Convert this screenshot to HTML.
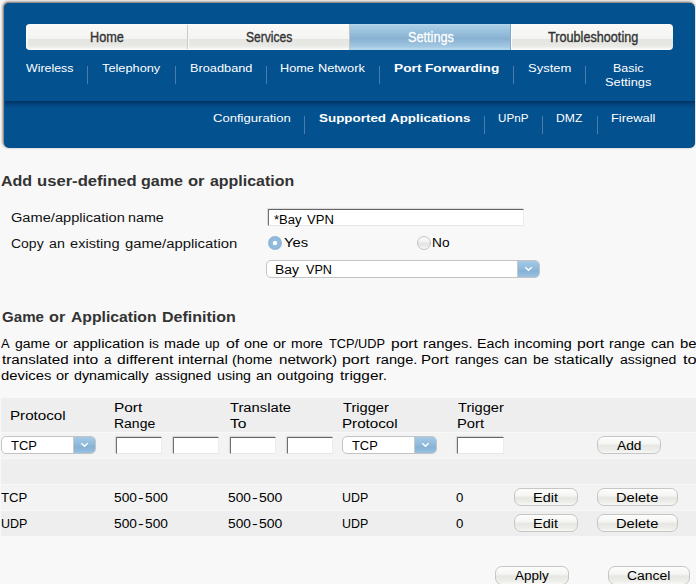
<!DOCTYPE html>
<html><head><meta charset="utf-8">
<style>
html,body{margin:0;padding:0;width:696px;height:584px;overflow:hidden;background:#f8f8f8;font-family:"Liberation Sans",sans-serif;}
.a{position:absolute;}
.t{position:absolute;white-space:nowrap;line-height:normal;transform-origin:0 0;}
#panel{left:4px;top:3px;width:691px;height:145px;background:#03518f;border-radius:5px;box-shadow:-1px -1px 3px rgba(60,45,35,0.8);}
#band{left:5px;top:101px;width:690px;height:7px;background:linear-gradient(#02315e,#03427a 40%,#03518f);}
#tabs{left:26px;top:24px;width:647px;height:26px;border-radius:4px;overflow:hidden;}
.wt{position:absolute;top:0;height:26px;background:linear-gradient(#fefefd 0,#f9f9f7 3.9%,#f4f4f2 55%,#f1f1ef 57.6%,#e5e5e1 57.7%,#e7e7e3 80%,#ececea 88%,#f6f6f4 94%,#fefefd 100%);}
.bt{position:absolute;top:0;height:26px;background:linear-gradient(#bcdbee 0,#aacee6 4%,#96bedb 35%,#88b1d1 57%,#8fb7d6 65%,#a2c8e2 88%,#b6d8ee 96%,#b0d2ea 100%);}
.sep{position:absolute;width:1px;background:#4a7cae;}
.sep2{position:absolute;width:1px;background:#5a88b8;}
.inp{position:absolute;background:#fff;border-top:1px solid #646464;border-left:1px solid #707070;border-right:1px solid #ededed;border-bottom:1px solid #e6e6e6;box-sizing:border-box;box-shadow:-1px -1px 1px rgba(0,0,0,0.12);border-top-left-radius:1px;}
.sel{position:absolute;background:#fff;border:1px solid #c4c4c4;border-radius:5px;box-sizing:border-box;overflow:hidden;}
.arr{position:absolute;top:-1px;bottom:-1px;right:-1px;width:23px;border-left:1px solid #c9c9c9;box-sizing:border-box;background:linear-gradient(#a6cbe6,#8fb9da 50%,#85b1d6 60%,#9cc4e2);border-radius:0 5px 5px 0;}
.btn{position:absolute;border:1px solid #c6c6c6;border-radius:7px;box-sizing:border-box;background:linear-gradient(#fdfdfc 0%,#f6f6f4 40%,#e6e6e2 55%,#eeeeeb 85%,#f8f8f6 100%);}
.chev{position:absolute;left:5.5px;top:6px;}
.radio{position:absolute;width:14px;height:14px;border-radius:50%;box-sizing:border-box;}
</style></head><body>
<div id="panel" class="a"></div>
<div id="band" class="a"></div>
<div id="tabs" class="a">
  <div class="wt" style="left:0;width:323px"></div>
  <div class="a" style="left:161px;top:1px;width:1px;height:24px;background:#cacac6"></div>
  <div class="a" style="left:162px;top:15px;width:1px;height:10px;background:#fdfdfc"></div>
  <div class="a" style="left:323px;top:0;width:1px;height:26px;background:#c4c4c0"></div>
  <div class="bt" style="left:324px;width:161px"></div>
  <div class="a" style="left:484px;top:0;width:1px;height:26px;background:#7fa8c9"></div>
  <div class="wt" style="left:485px;width:162px"></div>
  <div class="a" style="left:485px;top:0;width:1px;height:26px;background:#fefefe"></div>
  <div class="a" style="left:0;top:0;width:3px;height:26px;background:linear-gradient(90deg,#fdfdfc,rgba(253,253,252,0))"></div>
</div>
<!-- subnav separators -->
<div class="sep" style="left:87px;top:66px;height:18px"></div>
<div class="sep" style="left:175px;top:66px;height:18px"></div>
<div class="sep" style="left:266px;top:66px;height:18px"></div>
<div class="sep" style="left:379px;top:66px;height:18px"></div>
<div class="sep" style="left:513px;top:66px;height:18px"></div>
<div class="sep" style="left:585px;top:66px;height:18px"></div>
<div class="sep" style="left:304px;top:116px;height:18px"></div>
<div class="sep" style="left:484px;top:116px;height:18px"></div>
<div class="sep" style="left:542px;top:116px;height:18px"></div>
<div class="sep" style="left:597px;top:116px;height:18px"></div>

<!-- form 1 -->
<div class="inp" style="left:268px;top:209px;width:256px;height:17px"></div>
<div class="radio" style="left:268px;top:236px;background:radial-gradient(circle at 50% 50%,#9cc2e0 0,#8db7da 60%,#a3c8e4 100%);"><div style="position:absolute;left:5px;top:5px;width:4px;height:4px;border-radius:50%;background:#fff;box-shadow:0 0 0.6px #fff"></div></div>
<div class="radio" style="left:417px;top:236px;border:1px solid #c2c2c2;background:linear-gradient(#fbfbfb,#f2f2f2 40%,#e2e2e2 55%,#ececec 80%,#f8f8f8);"></div>
<div class="sel" style="left:266px;top:260px;width:274px;height:18px"><div class="arr"><svg class="chev" width="9" height="6" viewBox="0 0 9 6"><polyline points="1.3,1.3 4.5,4.3 7.7,1.3" fill="none" stroke="#fff" stroke-width="1.5"/></svg></div></div>

<!-- table -->
<div class="a" style="left:1px;top:398px;width:695px;height:34px;background:#eeeeee"></div>
<div class="a" style="left:1px;top:433px;width:695px;height:25px;background:#f3f3f3"></div>
<div class="a" style="left:1px;top:459px;width:695px;height:25px;background:#eeeeee"></div>
<div class="a" style="left:1px;top:485px;width:695px;height:25px;background:#f3f3f3"></div>
<div class="a" style="left:1px;top:511px;width:695px;height:25px;background:#eeeeee"></div>

<div class="sel" style="left:1px;top:436px;width:95px;height:18px"><div class="arr"><svg class="chev" width="9" height="6" viewBox="0 0 9 6"><polyline points="1.3,1.3 4.5,4.3 7.7,1.3" fill="none" stroke="#fff" stroke-width="1.5"/></svg></div></div>
<div class="inp" style="left:116px;top:437px;width:46px;height:17px"></div>
<div class="inp" style="left:173px;top:437px;width:46px;height:17px"></div>
<div class="inp" style="left:230px;top:437px;width:46px;height:17px"></div>
<div class="inp" style="left:287px;top:437px;width:46px;height:17px"></div>
<div class="sel" style="left:342px;top:436px;width:95px;height:18px"><div class="arr"><svg class="chev" width="9" height="6" viewBox="0 0 9 6"><polyline points="1.3,1.3 4.5,4.3 7.7,1.3" fill="none" stroke="#fff" stroke-width="1.5"/></svg></div></div>
<div class="inp" style="left:457px;top:437px;width:47px;height:17px"></div>
<div class="btn" style="left:597px;top:436px;width:64px;height:18px"></div>

<div class="btn" style="left:514px;top:488px;width:64px;height:18px"></div>
<div class="btn" style="left:597px;top:488px;width:81px;height:18px"></div>
<div class="btn" style="left:514px;top:514px;width:64px;height:18px"></div>
<div class="btn" style="left:597px;top:514px;width:81px;height:18px"></div>
<div class="btn" style="left:495px;top:566px;width:74px;height:19px"></div>
<div class="btn" style="left:608px;top:566px;width:82px;height:19px"></div>
<div class="t" style="left:89.80px;top:29px;font-size:14px;font-weight:normal;color:#333;transform:scaleX(0.9058);-webkit-text-stroke:0.35px #333">Home</div>
<div class="t" style="left:246.38px;top:29px;font-size:14px;font-weight:normal;color:#333;transform:scaleX(0.8615);-webkit-text-stroke:0.35px #333">Services</div>
<div class="t" style="left:408.46px;top:29px;font-size:14px;font-weight:normal;color:#fff;transform:scaleX(0.9073);-webkit-text-stroke:0.3px #fff">Settings</div>
<div class="t" style="left:548.03px;top:29px;font-size:14px;font-weight:normal;color:#333;transform:scaleX(0.9038);-webkit-text-stroke:0.35px #333">Troubleshooting</div>
<div class="t" style="left:25.90px;top:62px;font-size:11px;font-weight:normal;color:#fff;transform:scaleX(1.1250);">Wireless</div>
<div class="t" style="left:102.27px;top:62px;font-size:11px;font-weight:normal;color:#fff;transform:scaleX(1.1612);">Telephony</div>
<div class="t" style="left:189.66px;top:62px;font-size:11px;font-weight:normal;color:#fff;transform:scaleX(1.1605);">Broadband</div>
<div class="t" style="left:280.46px;top:62px;font-size:11px;font-weight:normal;color:#fff;transform:scaleX(1.1526);">Home</div>
<div class="t" style="left:317.96px;top:62px;font-size:11px;font-weight:normal;color:#fff;transform:scaleX(1.1608);">Network</div>
<div class="t" style="left:393.53px;top:62px;font-size:11px;font-weight:bold;color:#fff;transform:scaleX(1.2478);">Port</div>
<div class="t" style="left:425.13px;top:62px;font-size:11px;font-weight:bold;color:#fff;transform:scaleX(1.2400);">Forwarding</div>
<div class="t" style="left:527.91px;top:62px;font-size:11px;font-weight:normal;color:#fff;transform:scaleX(1.1827);">System</div>
<div class="t" style="left:612.98px;top:62px;font-size:11px;font-weight:normal;color:#fff;transform:scaleX(1.1319);">Basic</div>
<div class="t" style="left:604.82px;top:76px;font-size:11px;font-weight:normal;color:#fff;transform:scaleX(1.1657);">Settings</div>
<div class="t" style="left:212.91px;top:112px;font-size:11px;font-weight:normal;color:#fff;transform:scaleX(1.1879);">Configuration</div>
<div class="t" style="left:319.03px;top:112px;font-size:11px;font-weight:bold;color:#fff;transform:scaleX(1.2191);">Supported</div>
<div class="t" style="left:390.16px;top:112px;font-size:11px;font-weight:bold;color:#fff;transform:scaleX(1.2174);">Applications</div>
<div class="t" style="left:498.35px;top:112px;font-size:11px;font-weight:normal;color:#fff;transform:scaleX(1.0585);">UPnP</div>
<div class="t" style="left:556.40px;top:112px;font-size:11px;font-weight:normal;color:#fff;transform:scaleX(1.1059);">DMZ</div>
<div class="t" style="left:611.25px;top:112px;font-size:11px;font-weight:normal;color:#fff;transform:scaleX(1.1720);">Firewall</div>
<div class="t" style="left:1.06px;top:173px;font-size:14px;font-weight:bold;color:#333;transform:scaleX(1.1434);">Add</div>
<div class="t" style="left:36.75px;top:173px;font-size:14px;font-weight:bold;color:#333;transform:scaleX(1.1874);">user-defined</div>
<div class="t" style="left:141.03px;top:173px;font-size:14px;font-weight:bold;color:#333;transform:scaleX(1.1461);">game</div>
<div class="t" style="left:188.01px;top:173px;font-size:14px;font-weight:bold;color:#333;transform:scaleX(1.1834);">or</div>
<div class="t" style="left:210.04px;top:173px;font-size:14px;font-weight:bold;color:#333;transform:scaleX(1.1398);">application</div>
<div class="t" style="left:11.20px;top:211px;font-size:12.5px;font-weight:normal;color:#111;transform:scaleX(1.1697);">Game/application</div>
<div class="t" style="left:128.29px;top:211px;font-size:12.5px;font-weight:normal;color:#111;transform:scaleX(1.1432);">name</div>
<div class="t" style="left:10.93px;top:237px;font-size:12.5px;font-weight:normal;color:#111;transform:scaleX(1.1177);">Copy</div>
<div class="t" style="left:49.43px;top:237px;font-size:12.5px;font-weight:normal;color:#111;transform:scaleX(1.1382);">an</div>
<div class="t" style="left:69.92px;top:237px;font-size:12.5px;font-weight:normal;color:#111;transform:scaleX(1.1694);">existing</div>
<div class="t" style="left:124.91px;top:237px;font-size:12.5px;font-weight:normal;color:#111;transform:scaleX(1.1871);">game/application</div>
<div class="t" style="left:274.09px;top:213px;font-size:12.5px;font-weight:normal;color:#000;transform:scaleX(1.0437);">*Bay</div>
<div class="t" style="left:306.50px;top:213px;font-size:12.5px;font-weight:normal;color:#000;transform:scaleX(1.0454);">VPN</div>
<div class="t" style="left:283.76px;top:236px;font-size:12.5px;font-weight:normal;color:#000;transform:scaleX(1.1802);">Yes</div>
<div class="t" style="left:432.21px;top:236px;font-size:12.5px;font-weight:normal;color:#000;transform:scaleX(1.0945);">No</div>
<div class="t" style="left:275.29px;top:263px;font-size:12.5px;font-weight:normal;color:#000;transform:scaleX(1.1122);">Bay</div>
<div class="t" style="left:305.60px;top:263px;font-size:12.5px;font-weight:normal;color:#000;transform:scaleX(1.0091);">VPN</div>
<div class="t" style="left:1.56px;top:309px;font-size:14px;font-weight:bold;color:#333;transform:scaleX(1.0783);">Game</div>
<div class="t" style="left:49.12px;top:309px;font-size:14px;font-weight:bold;color:#333;transform:scaleX(1.1609);">or</div>
<div class="t" style="left:71.26px;top:309px;font-size:14px;font-weight:bold;color:#333;transform:scaleX(1.1216);">Application</div>
<div class="t" style="left:162.17px;top:309px;font-size:14px;font-weight:bold;color:#333;transform:scaleX(1.1450);">Definition</div>
<div class="t" style="left:1.15px;top:337px;font-size:12px;font-weight:normal;color:#000;transform:scaleX(1.0813);">A</div>
<div class="t" style="left:14.92px;top:337px;font-size:12px;font-weight:normal;color:#000;transform:scaleX(1.1672);">game</div>
<div class="t" style="left:55.09px;top:337px;font-size:12px;font-weight:normal;color:#000;transform:scaleX(1.2132);">or</div>
<div class="t" style="left:73.38px;top:337px;font-size:12px;font-weight:normal;color:#000;transform:scaleX(1.2406);">application</div>
<div class="t" style="left:148.88px;top:337px;font-size:12px;font-weight:normal;color:#000;transform:scaleX(1.1519);">is</div>
<div class="t" style="left:164.46px;top:337px;font-size:12px;font-weight:normal;color:#000;transform:scaleX(1.1961);">made</div>
<div class="t" style="left:204.94px;top:337px;font-size:12px;font-weight:normal;color:#000;transform:scaleX(1.0925);">up</div>
<div class="t" style="left:225.74px;top:337px;font-size:12px;font-weight:normal;color:#000;transform:scaleX(1.3265);">of</div>
<div class="t" style="left:243.70px;top:337px;font-size:12px;font-weight:normal;color:#000;transform:scaleX(1.2022);">one</div>
<div class="t" style="left:272.99px;top:337px;font-size:12px;font-weight:normal;color:#000;transform:scaleX(1.2132);">or</div>
<div class="t" style="left:290.58px;top:337px;font-size:12px;font-weight:normal;color:#000;transform:scaleX(1.1656);">more</div>
<div class="t" style="left:329.39px;top:337px;font-size:12px;font-weight:normal;color:#000;transform:scaleX(1.0643);">TCP/UDP</div>
<div class="t" style="left:390.99px;top:337px;font-size:12px;font-weight:normal;color:#000;transform:scaleX(1.2987);">port</div>
<div class="t" style="left:422.63px;top:337px;font-size:12px;font-weight:normal;color:#000;transform:scaleX(1.2379);">ranges.</div>
<div class="t" style="left:476.73px;top:337px;font-size:12px;font-weight:normal;color:#000;transform:scaleX(1.1839);">Each</div>
<div class="t" style="left:514.34px;top:337px;font-size:12px;font-weight:normal;color:#000;transform:scaleX(1.2013);">incoming</div>
<div class="t" style="left:576.68px;top:337px;font-size:12px;font-weight:normal;color:#000;transform:scaleX(1.3137);">port</div>
<div class="t" style="left:609.18px;top:337px;font-size:12px;font-weight:normal;color:#000;transform:scaleX(1.1756);">range</div>
<div class="t" style="left:650.99px;top:337px;font-size:12px;font-weight:normal;color:#000;transform:scaleX(1.2117);">can</div>
<div class="t" style="left:679.53px;top:337px;font-size:12px;font-weight:normal;color:#000;transform:scaleX(1.2404);">be</div>
<div class="t" style="left:1.57px;top:353px;font-size:12px;font-weight:normal;color:#000;transform:scaleX(1.2639);">translated</div>
<div class="t" style="left:72.96px;top:353px;font-size:12px;font-weight:normal;color:#000;transform:scaleX(1.3058);">into</div>
<div class="t" style="left:103.94px;top:353px;font-size:12px;font-weight:normal;color:#000;transform:scaleX(1.1129);">a</div>
<div class="t" style="left:117.05px;top:353px;font-size:12px;font-weight:normal;color:#000;transform:scaleX(1.3049);">different</div>
<div class="t" style="left:178.09px;top:353px;font-size:12px;font-weight:normal;color:#000;transform:scaleX(1.2675);">internal</div>
<div class="t" style="left:232.47px;top:353px;font-size:12px;font-weight:normal;color:#000;transform:scaleX(1.1906);">(home</div>
<div class="t" style="left:278.72px;top:353px;font-size:12px;font-weight:normal;color:#000;transform:scaleX(1.2641);">network)</div>
<div class="t" style="left:342.47px;top:353px;font-size:12px;font-weight:normal;color:#000;transform:scaleX(1.3237);">port</div>
<div class="t" style="left:375.85px;top:353px;font-size:12px;font-weight:normal;color:#000;transform:scaleX(1.2170);">range.</div>
<div class="t" style="left:421.27px;top:353px;font-size:12px;font-weight:normal;color:#000;transform:scaleX(1.2527);">Port</div>
<div class="t" style="left:455.17px;top:353px;font-size:12px;font-weight:normal;color:#000;transform:scaleX(1.1913);">ranges</div>
<div class="t" style="left:504.40px;top:353px;font-size:12px;font-weight:normal;color:#000;transform:scaleX(1.2062);">can</div>
<div class="t" style="left:532.87px;top:353px;font-size:12px;font-weight:normal;color:#000;transform:scaleX(1.1829);">be</div>
<div class="t" style="left:554.01px;top:353px;font-size:12px;font-weight:normal;color:#000;transform:scaleX(1.2885);">statically</div>
<div class="t" style="left:620.41px;top:353px;font-size:12px;font-weight:normal;color:#000;transform:scaleX(1.1719);">assigned</div>
<div class="t" style="left:682.56px;top:353px;font-size:12px;font-weight:normal;color:#000;transform:scaleX(1.3674);">to</div>
<div class="t" style="left:0.78px;top:369px;font-size:12px;font-weight:normal;color:#000;transform:scaleX(1.2366);">devices</div>
<div class="t" style="left:55.69px;top:369px;font-size:12px;font-weight:normal;color:#000;transform:scaleX(1.2132);">or</div>
<div class="t" style="left:74.01px;top:369px;font-size:12px;font-weight:normal;color:#000;transform:scaleX(1.1899);">dynamically</div>
<div class="t" style="left:154.92px;top:369px;font-size:12px;font-weight:normal;color:#000;transform:scaleX(1.1698);">assigned</div>
<div class="t" style="left:216.97px;top:369px;font-size:12px;font-weight:normal;color:#000;transform:scaleX(1.1832);">using</div>
<div class="t" style="left:256.30px;top:369px;font-size:12px;font-weight:normal;color:#000;transform:scaleX(1.1927);">an</div>
<div class="t" style="left:276.98px;top:369px;font-size:12px;font-weight:normal;color:#000;transform:scaleX(1.2330);">outgoing</div>
<div class="t" style="left:339.67px;top:369px;font-size:12px;font-weight:normal;color:#000;transform:scaleX(1.2798);">trigger.</div>
<div class="t" style="left:10.06px;top:409px;font-size:12px;font-weight:normal;color:#000;transform:scaleX(1.2631);">Protocol</div>
<div class="t" style="left:113.75px;top:401px;font-size:12px;font-weight:normal;color:#000;transform:scaleX(1.2812);">Port</div>
<div class="t" style="left:113.85px;top:417px;font-size:12px;font-weight:normal;color:#000;transform:scaleX(1.1651);">Range</div>
<div class="t" style="left:229.85px;top:401px;font-size:12px;font-weight:normal;color:#000;transform:scaleX(1.2290);">Translate</div>
<div class="t" style="left:229.84px;top:417px;font-size:12px;font-weight:normal;color:#000;transform:scaleX(1.3000);">To</div>
<div class="t" style="left:343.26px;top:401px;font-size:12px;font-weight:normal;color:#000;transform:scaleX(1.2188);">Trigger</div>
<div class="t" style="left:342.36px;top:417px;font-size:12px;font-weight:normal;color:#000;transform:scaleX(1.2631);">Protocol</div>
<div class="t" style="left:457.56px;top:401px;font-size:12px;font-weight:normal;color:#000;transform:scaleX(1.2188);">Trigger</div>
<div class="t" style="left:456.69px;top:417px;font-size:12px;font-weight:normal;color:#000;transform:scaleX(1.2290);">Port</div>
<div class="t" style="left:10.98px;top:439px;font-size:12px;font-weight:normal;color:#000;transform:scaleX(1.0778);">TCP</div>
<div class="t" style="left:351.99px;top:439px;font-size:12px;font-weight:normal;color:#000;transform:scaleX(1.0735);">TCP</div>
<div class="t" style="left:617.00px;top:439px;font-size:12px;font-weight:normal;color:#000;transform:scaleX(1.1469);">Add</div>
<div class="t" style="left:0.73px;top:491px;font-size:12px;font-weight:normal;color:#000;transform:scaleX(1.0972);">TCP</div>
<div class="t" style="left:114.24px;top:491px;font-size:12px;font-weight:normal;color:#000;transform:scaleX(1.1430);">500</div>
<div class="t" style="left:138.18px;top:491px;font-size:12px;font-weight:normal;color:#000;transform:scaleX(1.4333);">-</div>
<div class="t" style="left:145.34px;top:491px;font-size:12px;font-weight:normal;color:#000;transform:scaleX(1.1430);">500</div>
<div class="t" style="left:228.44px;top:491px;font-size:12px;font-weight:normal;color:#000;transform:scaleX(1.1430);">500</div>
<div class="t" style="left:252.28px;top:491px;font-size:12px;font-weight:normal;color:#000;transform:scaleX(1.4333);">-</div>
<div class="t" style="left:259.43px;top:491px;font-size:12px;font-weight:normal;color:#000;transform:scaleX(1.1638);">500</div>
<div class="t" style="left:341.67px;top:491px;font-size:12px;font-weight:normal;color:#000;transform:scaleX(1.0364);">UDP</div>
<div class="t" style="left:456.16px;top:491px;font-size:12px;font-weight:normal;color:#000;transform:scaleX(1.1017);">0</div>
<div class="t" style="left:533.02px;top:491px;font-size:12px;font-weight:normal;color:#000;transform:scaleX(1.2054);">Edit</div>
<div class="t" style="left:615.90px;top:491px;font-size:12px;font-weight:normal;color:#000;transform:scaleX(1.2187);">Delete</div>
<div class="t" style="left:0.66px;top:517px;font-size:12px;font-weight:normal;color:#000;transform:scaleX(1.0406);">UDP</div>
<div class="t" style="left:114.24px;top:517px;font-size:12px;font-weight:normal;color:#000;transform:scaleX(1.1430);">500</div>
<div class="t" style="left:138.18px;top:517px;font-size:12px;font-weight:normal;color:#000;transform:scaleX(1.4333);">-</div>
<div class="t" style="left:145.34px;top:517px;font-size:12px;font-weight:normal;color:#000;transform:scaleX(1.1430);">500</div>
<div class="t" style="left:228.44px;top:517px;font-size:12px;font-weight:normal;color:#000;transform:scaleX(1.1430);">500</div>
<div class="t" style="left:252.28px;top:517px;font-size:12px;font-weight:normal;color:#000;transform:scaleX(1.4333);">-</div>
<div class="t" style="left:259.43px;top:517px;font-size:12px;font-weight:normal;color:#000;transform:scaleX(1.1638);">500</div>
<div class="t" style="left:341.67px;top:517px;font-size:12px;font-weight:normal;color:#000;transform:scaleX(1.0364);">UDP</div>
<div class="t" style="left:456.16px;top:517px;font-size:12px;font-weight:normal;color:#000;transform:scaleX(1.1017);">0</div>
<div class="t" style="left:533.02px;top:517px;font-size:12px;font-weight:normal;color:#000;transform:scaleX(1.2054);">Edit</div>
<div class="t" style="left:615.90px;top:517px;font-size:12px;font-weight:normal;color:#000;transform:scaleX(1.2187);">Delete</div>
<div class="t" style="left:515.20px;top:569px;font-size:12px;font-weight:normal;color:#000;transform:scaleX(1.1193);">Apply</div>
<div class="t" style="left:627.30px;top:569px;font-size:12px;font-weight:normal;color:#000;transform:scaleX(1.1615);">Cancel</div>
</body></html>
